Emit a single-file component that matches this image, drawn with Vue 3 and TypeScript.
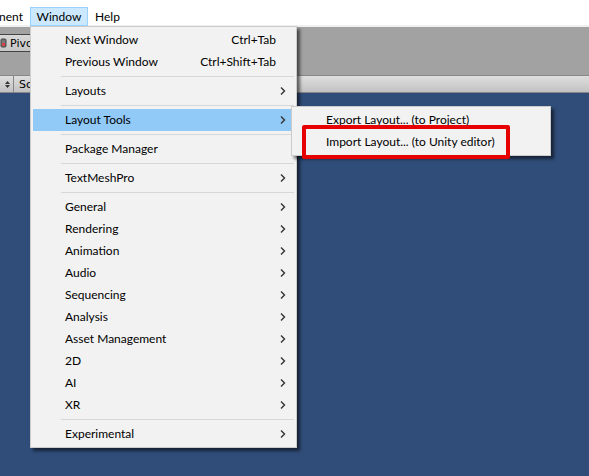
<script setup lang="ts">
interface MenuItem {
  label: string
  shortcut?: string
  submenu?: boolean
  open?: boolean
}

const groups: MenuItem[][] = [
  [
    { label: 'Next Window', shortcut: 'Ctrl+Tab' },
    { label: 'Previous Window', shortcut: 'Ctrl+Shift+Tab' },
  ],
  [{ label: 'Layouts', submenu: true }],
  [{ label: 'Layout Tools', submenu: true, open: true }],
  [{ label: 'Package Manager' }],
  [{ label: 'TextMeshPro', submenu: true }],
  [
    { label: 'General', submenu: true },
    { label: 'Rendering', submenu: true },
    { label: 'Animation', submenu: true },
    { label: 'Audio', submenu: true },
    { label: 'Sequencing', submenu: true },
    { label: 'Analysis', submenu: true },
    { label: 'Asset Management', submenu: true },
    { label: '2D', submenu: true },
    { label: 'AI', submenu: true },
    { label: 'XR', submenu: true },
  ],
  [{ label: 'Experimental', submenu: true }],
]

const layoutTools = [
  { label: 'Export Layout... (to Project)', marked: false },
  { label: 'Import Layout... (to Unity editor)', marked: true },
]
</script>

<template>
  <div class="editor">
    <nav class="menubar">
      <button class="top cut">nent</button>
      <div class="anchor">
        <button class="top active">Window</button>
        <div class="menu window-menu">
          <div v-for="(group, g) in groups" :key="g" class="group">
            <div v-for="item in group" :key="item.label" class="entry">
              <button class="item" :class="{ open: item.open }">
                <span class="label">{{ item.label }}</span>
                <span v-if="item.shortcut" class="shortcut">{{ item.shortcut }}</span>
                <svg v-if="item.submenu" class="chevron" viewBox="0 0 6 8" aria-hidden="true">
                  <path d="M1 0.5 L4.5 4 L1 7.5" />
                </svg>
              </button>
              <div v-if="item.open" class="menu submenu">
                <button
                  v-for="tool in layoutTools"
                  :key="tool.label"
                  class="item"
                  :class="{ marked: tool.marked }"
                >
                  <span class="label">{{ tool.label }}</span>
                </button>
              </div>
            </div>
          </div>
        </div>
      </div>
      <button class="top">Help</button>
    </nav>
    <div class="toolbar">
      <button class="pivot">
        <svg viewBox="0 0 7 10" aria-hidden="true">
          <rect x="1" y="1" width="5" height="8" rx="1" fill="#777" stroke="#444" />
          <rect x="2" y="5" width="3" height="3" fill="#d9404c" />
        </svg>
        <span>Pivot</span>
      </button>
    </div>
    <div class="tabs">
      <span class="stepper">
        <svg viewBox="0 0 5 7" aria-hidden="true">
          <path d="M0 3 L2.5 0 L5 3 Z M0 4 L2.5 7 L5 4 Z" fill="#333" />
        </svg>
      </span>
      <span class="tab">Scene</span>
    </div>
    <main class="scene"></main>
  </div>
</template>

<style>
body {
  margin: 0;
}
</style>

<style scoped>
.editor {
  display: flex;
  flex-direction: column;
  height: 100vh;
  overflow: hidden;
  font-family: Lato, 'Open Sans', sans-serif;
  font-size: 12px;
  color: #000;
  background: #304d79;
}
button {
  margin: 0;
  padding: 0;
  border: 0;
  background: none;
  font: inherit;
  color: inherit;
  white-space: nowrap;
}
.menubar {
  display: flex;
  align-items: flex-start;
  height: 18px;
  padding-top: 7px;
  background: #fff;
  border-bottom: 2px solid #f0f0f0;
}
.anchor {
  position: relative;
}
.top {
  box-sizing: border-box;
  display: block;
  height: 19px;
  padding: 0 7px;
  line-height: 19px;
}
.top.cut {
  width: 30px;
  display: flex;
  justify-content: flex-end;
}
.top.active {
  width: 58px;
  padding: 0;
  line-height: 17px;
  border: 1px solid #99d1ff;
  background: #cce8ff;
}
.menu {
  position: absolute;
  z-index: 1;
  box-sizing: border-box;
  padding: 2px;
  border: 1px solid #ccc;
  background: #f2f2f2;
  box-shadow: 3px 3px 3px rgba(0, 0, 0, 0.55);
}
.window-menu {
  top: 19px;
  left: 0;
  width: 267px;
}
.group + .group::before {
  content: '';
  display: block;
  height: 1px;
  margin: 3px 0 3px 28px;
  background: #d7d7d7;
}
.entry {
  position: relative;
}
.item {
  display: flex;
  align-items: center;
  width: 100%;
  height: 22px;
  padding: 0 8px 0 32px;
  line-height: 22px;
}
.item.open {
  background: #91c9f7;
}
.label {
  flex: 1;
  text-align: left;
}
.shortcut {
  margin-right: 10px;
}
.chevron {
  width: 6px;
  height: 8px;
  fill: none;
  stroke: #333;
  stroke-width: 1.4;
}
.submenu {
  top: -3px;
  left: 258px;
  width: 260px;
}
.marked {
  position: relative;
}
.marked::after {
  content: '';
  position: absolute;
  inset: -6px 38px -6px 8px;
  border: 4px solid #e60000;
  border-radius: 2px;
}
.toolbar {
  height: 41px;
  padding-top: 7px;
  background: #a2a2a2;
}
.pivot {
  display: flex;
  align-items: center;
  gap: 3px;
  box-sizing: border-box;
  height: 18px;
  border: solid #444;
  border-width: 1px 0;
  background: linear-gradient(#d8d8d8, #c6c6c6);
  font-family: 'DejaVu Sans', sans-serif;
  font-size: 11px;
}
.pivot svg {
  width: 7px;
  height: 10px;
}
.tabs {
  display: flex;
  height: 16px;
  border-top: 1px solid #888;
  border-bottom: 1px solid #888;
  background: linear-gradient(#dedede, #c2c2c2);
  font-family: 'DejaVu Sans', sans-serif;
  font-size: 11px;
  line-height: 18px;
}
.stepper {
  display: flex;
  align-items: center;
  justify-content: flex-end;
  width: 10px;
  padding-right: 3px;
  border-right: 1px solid #888;
}
.stepper svg {
  width: 5px;
  height: 7px;
}
.tab {
  padding-left: 5px;
}
.scene {
  flex: 1;
  background: #304d79;
}
</style>
